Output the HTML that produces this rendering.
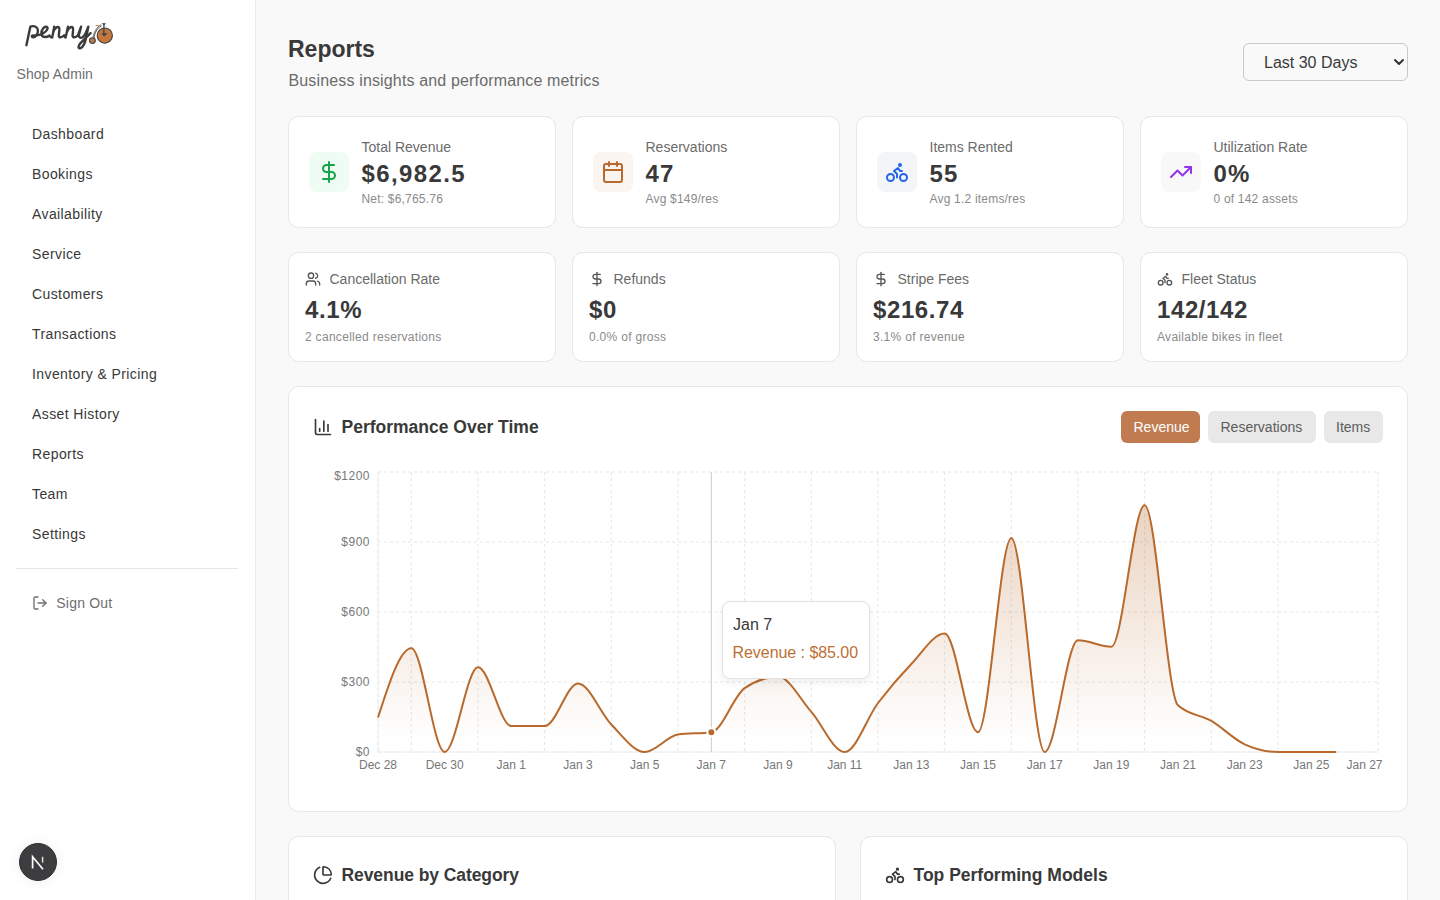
<!DOCTYPE html>
<html><head><meta charset="utf-8"><title>Reports</title>
<style>
*{box-sizing:border-box;margin:0;padding:0}
html,body{width:1440px;height:900px;overflow:hidden}
body{background:#f9f9f9;font-family:"Liberation Sans",sans-serif;position:relative}
.t{position:absolute;white-space:nowrap}
.card{position:absolute;background:#fff;border:1px solid #e7e7e7;border-radius:11px}
</style></head><body>
<div style="position:absolute;left:0px;top:0px;width:256px;height:900px;background:#fff;border-right:1px solid #ebebeb"></div>
<svg style="position:absolute;left:0;top:0" width="130" height="60" viewBox="0 0 130 60">
<g fill="none" stroke="#3b3b3b" stroke-width="2.4" stroke-linecap="round" stroke-linejoin="round">
<path d="M26.4,45.2 L30.4,26.6 C33,25.6 36.8,26.2 37.8,29.5 C38.6,33 36,37.2 33.2,37.3 C31.3,37.3 31.6,35.2 32.8,35.4"/>
<path d="M33.5,35.6 C37,35.6 40.5,34.5 43,33.3 C47,31.3 48.6,28 46.7,26.9 C44.3,25.8 41.2,30 41.4,33.6 C41.6,37.8 46,37.6 49.5,35.6"/>
<path d="M49.3,36 Q51,37.6 52.2,37.6 L54.3,26.7 L53.2,32 C54.5,28.5 57.5,26 59,27.5 C60,28.8 58.8,33.5 58.8,35.8 C58.9,38 61.5,37.5 64,35.6"/>
<path d="M64,35.6 Q65,37.6 65.6,37.6 L68,26.7 L66.9,32 C68.2,28.5 71.2,26 72.7,27.5 C73.7,28.8 72.6,33.5 72.6,35.8 C72.7,38 75.5,37.5 77.8,35.6"/>
<path d="M77.8,35.6 L81.1,26.7 L78.9,35 C78.4,37.5 80.5,38.3 82.5,37.3 C84.5,36.2 86.5,32 88.3,26.7 L85.8,39 C85,43 82.5,48.3 79.8,48.3 C77.8,48.3 78.3,45.5 80.5,43.2 C83.5,40 87.5,36.2 90.6,33.2"/>
</g>
<g>
<path d="M94,38.2 C94.5,33 97,28 101.5,25.8" fill="none" stroke="#3b3b3b" stroke-width="0.9"/>
<path d="M92.8,38.6 C93.5,32.5 96.5,27.2 101.2,24.6" fill="none" stroke="#3b3b3b" stroke-width="0.7"/>
<circle cx="104.8" cy="35.6" r="7.6" fill="#c4773a" stroke="#3f4247" stroke-width="1.1"/>
<circle cx="92.4" cy="40.6" r="2.9" fill="#c4773a" stroke="#3f4247" stroke-width="1.1"/>
<line x1="103.9" y1="23.4" x2="103.9" y2="36" stroke="#3f4247" stroke-width="1.3"/>
<path d="M101.8,23.3 L106,23.3 L104.5,25 L103.4,25 Z" fill="#3f4247"/>
<path d="M101.2,33.2 L107.6,33.2 L104.3,36.6 Z" fill="#3f4247"/>
<rect x="95.7" y="25" width="3.6" height="1.2" fill="#d48a52"/>
</g>
</svg>
<div class="t" style="left:16.5px;top:67px;font-size:14px;line-height:14px;color:#6e6e6e;font-weight:400;letter-spacing:0.1px">Shop Admin</div>
<div class="t" style="left:32px;top:127px;font-size:14px;line-height:14px;color:#383838;font-weight:400;letter-spacing:0.4px">Dashboard</div>
<div class="t" style="left:32px;top:167px;font-size:14px;line-height:14px;color:#383838;font-weight:400;letter-spacing:0.4px">Bookings</div>
<div class="t" style="left:32px;top:207px;font-size:14px;line-height:14px;color:#383838;font-weight:400;letter-spacing:0.4px">Availability</div>
<div class="t" style="left:32px;top:247px;font-size:14px;line-height:14px;color:#383838;font-weight:400;letter-spacing:0.4px">Service</div>
<div class="t" style="left:32px;top:287px;font-size:14px;line-height:14px;color:#383838;font-weight:400;letter-spacing:0.4px">Customers</div>
<div class="t" style="left:32px;top:327px;font-size:14px;line-height:14px;color:#383838;font-weight:400;letter-spacing:0.4px">Transactions</div>
<div class="t" style="left:32px;top:367px;font-size:14px;line-height:14px;color:#383838;font-weight:400;letter-spacing:0.4px">Inventory &amp; Pricing</div>
<div class="t" style="left:32px;top:407px;font-size:14px;line-height:14px;color:#383838;font-weight:400;letter-spacing:0.4px">Asset History</div>
<div class="t" style="left:32px;top:447px;font-size:14px;line-height:14px;color:#383838;font-weight:400;letter-spacing:0.4px">Reports</div>
<div class="t" style="left:32px;top:487px;font-size:14px;line-height:14px;color:#383838;font-weight:400;letter-spacing:0.4px">Team</div>
<div class="t" style="left:32px;top:527px;font-size:14px;line-height:14px;color:#383838;font-weight:400;letter-spacing:0.4px">Settings</div>
<div style="position:absolute;left:16px;top:568px;width:222px;height:1px;background:#e5e5e5"></div>
<svg style="position:absolute;left:32px;top:595px" width="16" height="16" viewBox="0 0 24 24" fill="none" stroke="#6e6e6e" stroke-width="2" stroke-linecap="round" stroke-linejoin="round"><path d="M9 21H5a2 2 0 0 1-2-2V5a2 2 0 0 1 2-2h4"/><polyline points="16 17 21 12 16 7"/><line x1="21" x2="9" y1="12" y2="12"/></svg>
<div class="t" style="left:56.3px;top:596px;font-size:14px;line-height:14px;color:#6e6e6e;font-weight:400;letter-spacing:0.2px">Sign Out</div>
<div style="position:absolute;left:19px;top:843px;width:38px;height:38px;border-radius:50%;background:#3d3d3f;border:1px solid #2f2f31;box-shadow:0 0 14px rgba(0,0,0,0.07)"></div>
<svg style="position:absolute;left:19px;top:843px" width="38" height="38" viewBox="0 0 38 38">
<path d="M13.6,25.4 V13.8 L24,26.2" fill="none" stroke="#fff" stroke-width="1.7"/>
<line x1="23.6" y1="13.8" x2="23.6" y2="19.6" stroke="#fff" stroke-width="1.5" stroke-opacity="0.85"/>
</svg>
<div class="t" style="left:288px;top:38px;font-size:23px;line-height:23px;color:#393939;font-weight:700;">Reports</div>
<div class="t" style="left:288.5px;top:73px;font-size:16px;line-height:16px;color:#6b6b6b;font-weight:400;letter-spacing:0.15px">Business insights and performance metrics</div>
<div style="position:absolute;left:1243px;top:43px;width:165px;height:38px;border:1px solid #c9c9c9;border-radius:6px;background:#f9f9f9"></div>
<div class="t" style="left:1264px;top:55px;font-size:16px;line-height:16px;color:#3a3a3a;font-weight:400;">Last 30 Days</div>
<svg style="position:absolute;left:1393px;top:57px" width="12" height="10" viewBox="0 0 12 10"><path d="M2,3 L6,7 L10,3" fill="none" stroke="#333" stroke-width="2" stroke-linecap="round" stroke-linejoin="round"/></svg>
<div class="card" style="left:288px;top:116px;width:268px;height:112px"></div>
<div style="position:absolute;left:309px;top:152px;width:40px;height:40px;background:#effcf3;border-radius:8px"></div>
<svg style="position:absolute;left:317px;top:160px" width="24" height="24" viewBox="0 0 24 24" fill="none" stroke="#16a34a" stroke-width="2" stroke-linecap="round" stroke-linejoin="round"><line x1="12" x2="12" y1="2" y2="22"/><path d="M17 5H9.5a3.5 3.5 0 0 0 0 7h5a3.5 3.5 0 0 1 0 7H6"/></svg>
<div class="t" style="left:361.5px;top:140px;font-size:14px;line-height:14px;color:#6b6b6b;font-weight:400;">Total Revenue</div>
<div class="t" style="left:361.5px;top:162px;font-size:24px;line-height:24px;color:#393939;font-weight:700;letter-spacing:1.4px">$6,982.5</div>
<div class="t" style="left:361.5px;top:193px;font-size:12px;line-height:12px;color:#8a8a8a;font-weight:400;letter-spacing:0.2px">Net: $6,765.76</div>
<div class="card" style="left:572px;top:116px;width:268px;height:112px"></div>
<div style="position:absolute;left:593px;top:152px;width:40px;height:40px;background:#faf5f1;border-radius:8px"></div>
<svg style="position:absolute;left:601px;top:160px" width="24" height="24" viewBox="0 0 24 24" fill="none" stroke="#b8692b" stroke-width="2" stroke-linecap="round" stroke-linejoin="round"><path d="M8 2v4"/><path d="M16 2v4"/><rect width="18" height="18" x="3" y="4" rx="2"/><path d="M3 10h18"/></svg>
<div class="t" style="left:645.5px;top:140px;font-size:14px;line-height:14px;color:#6b6b6b;font-weight:400;">Reservations</div>
<div class="t" style="left:645.5px;top:162px;font-size:24px;line-height:24px;color:#393939;font-weight:700;letter-spacing:1.1px">47</div>
<div class="t" style="left:645.5px;top:193px;font-size:12px;line-height:12px;color:#8a8a8a;font-weight:400;letter-spacing:0.2px">Avg $149/res</div>
<div class="card" style="left:856px;top:116px;width:268px;height:112px"></div>
<div style="position:absolute;left:877px;top:152px;width:40px;height:40px;background:#f3f5f9;border-radius:8px"></div>
<svg style="position:absolute;left:885px;top:160px" width="24" height="24" viewBox="0 0 24 24" fill="none" stroke="#2563eb" stroke-width="2" stroke-linecap="round" stroke-linejoin="round"><circle cx="18.5" cy="17.5" r="3.5"/><circle cx="5.5" cy="17.5" r="3.5"/><circle cx="15" cy="5" r="1"/><path d="M12 17.5V14l-3-3 4-3 2 3h2"/></svg>
<div class="t" style="left:929.5px;top:140px;font-size:14px;line-height:14px;color:#6b6b6b;font-weight:400;">Items Rented</div>
<div class="t" style="left:929.5px;top:162px;font-size:24px;line-height:24px;color:#393939;font-weight:700;letter-spacing:1.1px">55</div>
<div class="t" style="left:929.5px;top:193px;font-size:12px;line-height:12px;color:#8a8a8a;font-weight:400;letter-spacing:0.2px">Avg 1.2 items/res</div>
<div class="card" style="left:1140px;top:116px;width:268px;height:112px"></div>
<div style="position:absolute;left:1161px;top:152px;width:40px;height:40px;background:#f8f8f9;border-radius:8px"></div>
<svg style="position:absolute;left:1169px;top:160px" width="24" height="24" viewBox="0 0 24 24" fill="none" stroke="#9333ea" stroke-width="2" stroke-linecap="round" stroke-linejoin="round"><polyline points="22 7 13.5 15.5 8.5 10.5 2 17"/><polyline points="16 7 22 7 22 13"/></svg>
<div class="t" style="left:1213.5px;top:140px;font-size:14px;line-height:14px;color:#6b6b6b;font-weight:400;">Utilization Rate</div>
<div class="t" style="left:1213.5px;top:162px;font-size:24px;line-height:24px;color:#393939;font-weight:700;letter-spacing:1.1px">0%</div>
<div class="t" style="left:1213.5px;top:193px;font-size:12px;line-height:12px;color:#8a8a8a;font-weight:400;letter-spacing:0.2px">0 of 142 assets</div>
<div class="card" style="left:288px;top:252px;width:268px;height:110px"></div>
<svg style="position:absolute;left:305px;top:271px" width="16" height="16" viewBox="0 0 24 24" fill="none" stroke="#555555" stroke-width="2" stroke-linecap="round" stroke-linejoin="round"><path d="M16 21v-2a4 4 0 0 0-4-4H6a4 4 0 0 0-4 4v2"/><circle cx="9" cy="7" r="4"/><path d="M22 21v-2a4 4 0 0 0-3-3.87"/><path d="M16 3.13a4 4 0 0 1 0 7.75"/></svg>
<div class="t" style="left:329.5px;top:272px;font-size:14px;line-height:14px;color:#6b6b6b;font-weight:400;">Cancellation Rate</div>
<div class="t" style="left:305px;top:298px;font-size:24px;line-height:24px;color:#393939;font-weight:700;letter-spacing:0.6px">4.1%</div>
<div class="t" style="left:305px;top:331px;font-size:12px;line-height:12px;color:#8a8a8a;font-weight:400;letter-spacing:0.3px">2 cancelled reservations</div>
<div class="card" style="left:572px;top:252px;width:268px;height:110px"></div>
<svg style="position:absolute;left:589px;top:271px" width="16" height="16" viewBox="0 0 24 24" fill="none" stroke="#555555" stroke-width="2" stroke-linecap="round" stroke-linejoin="round"><line x1="12" x2="12" y1="2" y2="22"/><path d="M17 5H9.5a3.5 3.5 0 0 0 0 7h5a3.5 3.5 0 0 1 0 7H6"/></svg>
<div class="t" style="left:613.5px;top:272px;font-size:14px;line-height:14px;color:#6b6b6b;font-weight:400;">Refunds</div>
<div class="t" style="left:589px;top:298px;font-size:24px;line-height:24px;color:#393939;font-weight:700;letter-spacing:0.6px">$0</div>
<div class="t" style="left:589px;top:331px;font-size:12px;line-height:12px;color:#8a8a8a;font-weight:400;letter-spacing:0.3px">0.0% of gross</div>
<div class="card" style="left:856px;top:252px;width:268px;height:110px"></div>
<svg style="position:absolute;left:873px;top:271px" width="16" height="16" viewBox="0 0 24 24" fill="none" stroke="#555555" stroke-width="2" stroke-linecap="round" stroke-linejoin="round"><line x1="12" x2="12" y1="2" y2="22"/><path d="M17 5H9.5a3.5 3.5 0 0 0 0 7h5a3.5 3.5 0 0 1 0 7H6"/></svg>
<div class="t" style="left:897.5px;top:272px;font-size:14px;line-height:14px;color:#6b6b6b;font-weight:400;">Stripe Fees</div>
<div class="t" style="left:873px;top:298px;font-size:24px;line-height:24px;color:#393939;font-weight:700;letter-spacing:0.6px">$216.74</div>
<div class="t" style="left:873px;top:331px;font-size:12px;line-height:12px;color:#8a8a8a;font-weight:400;letter-spacing:0.3px">3.1% of revenue</div>
<div class="card" style="left:1140px;top:252px;width:268px;height:110px"></div>
<svg style="position:absolute;left:1157px;top:271px" width="16" height="16" viewBox="0 0 24 24" fill="none" stroke="#555555" stroke-width="2" stroke-linecap="round" stroke-linejoin="round"><circle cx="18.5" cy="17.5" r="3.5"/><circle cx="5.5" cy="17.5" r="3.5"/><circle cx="15" cy="5" r="1"/><path d="M12 17.5V14l-3-3 4-3 2 3h2"/></svg>
<div class="t" style="left:1181.5px;top:272px;font-size:14px;line-height:14px;color:#6b6b6b;font-weight:400;">Fleet Status</div>
<div class="t" style="left:1157px;top:298px;font-size:24px;line-height:24px;color:#393939;font-weight:700;letter-spacing:0.6px">142/142</div>
<div class="t" style="left:1157px;top:331px;font-size:12px;line-height:12px;color:#8a8a8a;font-weight:400;letter-spacing:0.3px">Available bikes in fleet</div>
<div class="card" style="left:288px;top:386px;width:1120px;height:426px"></div>
<svg style="position:absolute;left:313px;top:417px" width="20" height="20" viewBox="0 0 24 24" fill="none" stroke="#3a3a3a" stroke-width="2" stroke-linecap="round" stroke-linejoin="round"><path d="M3 3v16a2 2 0 0 0 2 2h16"/><path d="M18 17V9"/><path d="M13 17V5"/><path d="M8 17v-3"/></svg>
<div class="t" style="left:341.5px;top:419px;font-size:17.5px;line-height:17.5px;color:#393939;font-weight:700;">Performance Over Time</div>
<div style="position:absolute;left:1121px;top:411px;width:79px;height:32px;background:#c17b51;border-radius:6px"></div>
<div class="t" style="left:1133.5px;top:420px;font-size:14px;line-height:14px;color:#ffffff;font-weight:400;">Revenue</div>
<div style="position:absolute;left:1208px;top:411px;width:108px;height:32px;background:#e8e8e8;border-radius:6px"></div>
<div class="t" style="left:1220.5px;top:420px;font-size:14px;line-height:14px;color:#5c5c5c;font-weight:400;">Reservations</div>
<div style="position:absolute;left:1324px;top:411px;width:59px;height:32px;background:#e8e8e8;border-radius:6px"></div>
<div class="t" style="left:1336px;top:420px;font-size:14px;line-height:14px;color:#5c5c5c;font-weight:400;">Items</div>
<svg style="position:absolute;left:0;top:0" width="1440" height="900" viewBox="0 0 1440 900">
<defs>
<linearGradient id="g" x1="0" y1="0" x2="0" y2="1">
<stop offset="5%" stop-color="#b8692b" stop-opacity="0.28"/>
<stop offset="95%" stop-color="#b8692b" stop-opacity="0"/>
</linearGradient>
<clipPath id="clip"><rect x="370" y="440" width="966.3" height="330"/></clipPath>
</defs>
<g stroke="#e3e5e8" stroke-width="1" stroke-dasharray="3 3"><line x1="378" x2="1378" y1="752.0" y2="752.0"/><line x1="378" x2="1378" y1="682.0" y2="682.0"/><line x1="378" x2="1378" y1="612.0" y2="612.0"/><line x1="378" x2="1378" y1="542.0" y2="542.0"/><line x1="378" x2="1378" y1="472.0" y2="472.0"/><line x1="378.0" x2="378.0" y1="472" y2="752"/><line x1="411.3" x2="411.3" y1="472" y2="752"/><line x1="478.0" x2="478.0" y1="472" y2="752"/><line x1="544.7" x2="544.7" y1="472" y2="752"/><line x1="611.3" x2="611.3" y1="472" y2="752"/><line x1="678.0" x2="678.0" y1="472" y2="752"/><line x1="744.7" x2="744.7" y1="472" y2="752"/><line x1="811.3" x2="811.3" y1="472" y2="752"/><line x1="878.0" x2="878.0" y1="472" y2="752"/><line x1="944.7" x2="944.7" y1="472" y2="752"/><line x1="1011.3" x2="1011.3" y1="472" y2="752"/><line x1="1078.0" x2="1078.0" y1="472" y2="752"/><line x1="1144.7" x2="1144.7" y1="472" y2="752"/><line x1="1211.3" x2="1211.3" y1="472" y2="752"/><line x1="1278.0" x2="1278.0" y1="472" y2="752"/><line x1="1378.0" x2="1378.0" y1="472" y2="752"/></g>
<path d="M378,472V752H1378" fill="none" stroke="#eceef1" stroke-width="1"/>
<g clip-path="url(#clip)">
<path d="M378,717.47C389.11,682.82,400.22,648.17,411.33,648.17C422.44,648.17,433.56,752,444.67,752C455.78,752,466.89,667.3,478,667.3C489.11,667.3,500.22,726.1,511.33,726.1C522.44,726.1,533.56,726.1,544.67,726.1C555.78,726.1,566.89,683.4,578,683.4C589.11,683.4,600.22,713.03,611.33,724.47C622.44,735.9,633.56,752,644.67,752C655.78,752,666.89,736.06,678,734.5C689.11,732.94,700.22,733.72,711.33,732.17C722.44,730.61,733.56,695.53,744.67,688.07C755.78,680.6,766.89,676.87,778,676.87C789.11,676.87,800.22,699.34,811.33,711.87C822.44,724.39,833.56,752,844.67,752C855.78,752,866.89,717.66,878,703C889.11,688.34,900.22,675.62,911.33,664.03C922.44,652.44,933.56,633.47,944.67,633.47C955.78,633.47,966.89,732.17,978,732.17C989.11,732.17,1000.22,538.03,1011.33,538.03C1022.44,538.03,1033.56,752,1044.67,752C1055.78,752,1066.89,640.23,1078,640.23C1089.11,640.23,1100.22,646.77,1111.33,646.77C1122.44,646.77,1133.56,505.13,1144.67,505.13C1155.78,505.13,1166.89,694.91,1178,705.33C1189.11,715.76,1200.22,714.47,1211.33,720.97C1222.44,727.46,1233.56,739.17,1244.67,744.3C1255.78,749.43,1266.89,752,1278,752C1289.11,752,1300.22,752,1311.33,752C1322.44,752,1333.56,752,1344.67,752C1355.78,752,1366.89,752,1378,752L1378.00,752.0L378.00,752.0Z" fill="url(#g)" stroke="none"/>
<path d="M378,717.47C389.11,682.82,400.22,648.17,411.33,648.17C422.44,648.17,433.56,752,444.67,752C455.78,752,466.89,667.3,478,667.3C489.11,667.3,500.22,726.1,511.33,726.1C522.44,726.1,533.56,726.1,544.67,726.1C555.78,726.1,566.89,683.4,578,683.4C589.11,683.4,600.22,713.03,611.33,724.47C622.44,735.9,633.56,752,644.67,752C655.78,752,666.89,736.06,678,734.5C689.11,732.94,700.22,733.72,711.33,732.17C722.44,730.61,733.56,695.53,744.67,688.07C755.78,680.6,766.89,676.87,778,676.87C789.11,676.87,800.22,699.34,811.33,711.87C822.44,724.39,833.56,752,844.67,752C855.78,752,866.89,717.66,878,703C889.11,688.34,900.22,675.62,911.33,664.03C922.44,652.44,933.56,633.47,944.67,633.47C955.78,633.47,966.89,732.17,978,732.17C989.11,732.17,1000.22,538.03,1011.33,538.03C1022.44,538.03,1033.56,752,1044.67,752C1055.78,752,1066.89,640.23,1078,640.23C1089.11,640.23,1100.22,646.77,1111.33,646.77C1122.44,646.77,1133.56,505.13,1144.67,505.13C1155.78,505.13,1166.89,694.91,1178,705.33C1189.11,715.76,1200.22,714.47,1211.33,720.97C1222.44,727.46,1233.56,739.17,1244.67,744.3C1255.78,749.43,1266.89,752,1278,752C1289.11,752,1300.22,752,1311.33,752C1322.44,752,1333.56,752,1344.67,752C1355.78,752,1366.89,752,1378,752" fill="none" stroke="#b8692b" stroke-width="2"/>
</g>
<line x1="711.33" x2="711.33" y1="472" y2="752" stroke="#cccccc" stroke-width="1"/>
<circle cx="711.33" cy="732.2" r="4" fill="#b8692b" stroke="#fff" stroke-width="2"/>
<g font-family="Liberation Sans" font-size="12" fill="#777777"><text x="370" y="756.2" text-anchor="end" letter-spacing="0.5">$0</text><text x="370" y="686.2" text-anchor="end" letter-spacing="0.5">$300</text><text x="370" y="616.2" text-anchor="end" letter-spacing="0.5">$600</text><text x="370" y="546.2" text-anchor="end" letter-spacing="0.5">$900</text><text x="370" y="480.0" text-anchor="end" letter-spacing="0.5">$1200</text><text x="378.0" y="769" text-anchor="middle">Dec 28</text><text x="444.7" y="769" text-anchor="middle">Dec 30</text><text x="511.3" y="769" text-anchor="middle">Jan 1</text><text x="578.0" y="769" text-anchor="middle">Jan 3</text><text x="644.7" y="769" text-anchor="middle">Jan 5</text><text x="711.3" y="769" text-anchor="middle">Jan 7</text><text x="778.0" y="769" text-anchor="middle">Jan 9</text><text x="844.7" y="769" text-anchor="middle">Jan 11</text><text x="911.3" y="769" text-anchor="middle">Jan 13</text><text x="978.0" y="769" text-anchor="middle">Jan 15</text><text x="1044.7" y="769" text-anchor="middle">Jan 17</text><text x="1111.3" y="769" text-anchor="middle">Jan 19</text><text x="1178.0" y="769" text-anchor="middle">Jan 21</text><text x="1244.7" y="769" text-anchor="middle">Jan 23</text><text x="1311.3" y="769" text-anchor="middle">Jan 25</text><text x="1382.5" y="769" text-anchor="end">Jan 27</text></g>
</svg>
<div style="position:absolute;left:722px;top:601px;width:148px;height:78px;background:#fff;border:1px solid #e2e2e2;border-radius:8px;box-shadow:0 4px 10px rgba(0,0,0,0.06)"></div>
<div class="t" style="left:733px;top:617px;font-size:16px;line-height:16px;color:#393939;font-weight:400;">Jan 7</div>
<div class="t" style="left:732.5px;top:645px;font-size:16px;line-height:16px;color:#bd7035;font-weight:400;letter-spacing:-0.05px">Revenue : $85.00</div>
<div class="card" style="left:288px;top:836px;width:548px;height:120px"></div>
<div class="card" style="left:860px;top:836px;width:548px;height:120px"></div>
<svg style="position:absolute;left:313px;top:865px" width="20" height="20" viewBox="0 0 24 24" fill="none" stroke="#3a3a3a" stroke-width="2" stroke-linecap="round" stroke-linejoin="round"><path d="M21 12c.552 0 1.005-.449.95-.998a10 10 0 0 0-8.953-8.951c-.55-.055-.998.398-.998.95v8a1 1 0 0 0 1 1z"/><path d="M21.21 15.89A10 10 0 1 1 8 2.83"/></svg>
<div class="t" style="left:341.5px;top:867px;font-size:17.5px;line-height:17.5px;color:#393939;font-weight:700;letter-spacing:-0.08px">Revenue by Category</div>
<svg style="position:absolute;left:885px;top:865px" width="20" height="20" viewBox="0 0 24 24" fill="none" stroke="#3a3a3a" stroke-width="2" stroke-linecap="round" stroke-linejoin="round"><circle cx="18.5" cy="17.5" r="3.5"/><circle cx="5.5" cy="17.5" r="3.5"/><circle cx="15" cy="5" r="1"/><path d="M12 17.5V14l-3-3 4-3 2 3h2"/></svg>
<div class="t" style="left:913.5px;top:867px;font-size:17.5px;line-height:17.5px;color:#393939;font-weight:700;">Top Performing Models</div>
</body></html>
